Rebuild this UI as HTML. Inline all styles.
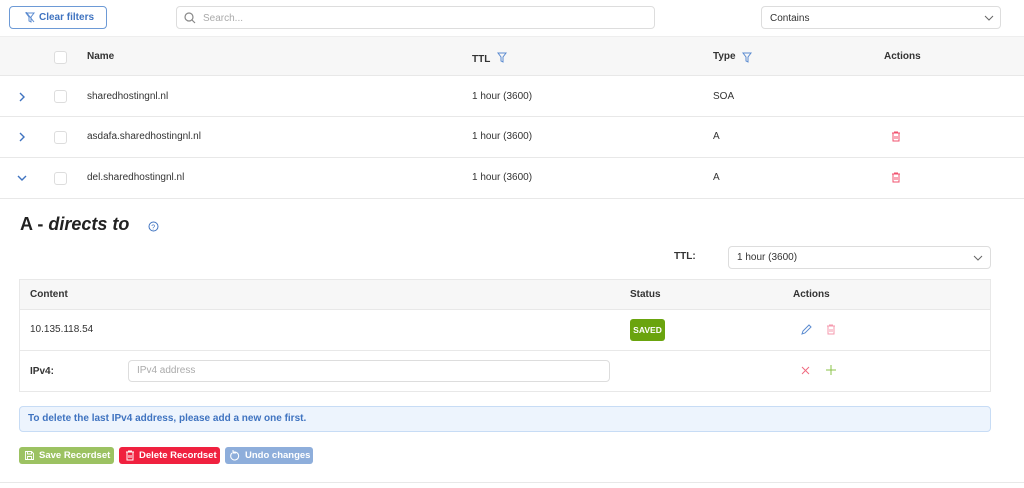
<!DOCTYPE html><html><head><style>
*{box-sizing:border-box;margin:0;padding:0}
body{width:1024px;height:488px;background:#fff;font-family:"Liberation Sans",sans-serif;font-size:10px;color:#333;position:relative;overflow:hidden}
.a{position:absolute}
.b{font-weight:bold;color:#333}
.cb{position:absolute;width:13px;height:13px;border:1px solid #ddd;border-radius:3px;background:#fff}
.line{position:absolute;left:0;width:1024px;height:1px;background:#e8e8e8}
.btn{position:absolute;height:17px;border-radius:3px;color:#fff;font-weight:bold;font-size:9.5px;line-height:17px;padding-left:20px}
</style></head><body>
<div class="a" style="left:9px;top:6px;width:98px;height:23px;border:1px solid #6d9ad6;border-radius:4px;color:#3f73c0;font-weight:bold;font-size:10px;line-height:21px;padding-left:29px">Clear filters
<svg class="a" style="left:15px;top:5px" width="10" height="11" viewBox="0 0 10 11"><path d="M1 1h8L6 5v5L4 9V5z" fill="none" stroke="#5b8bd0" stroke-width="1"/><path d="M1 0l8 10" stroke="#5b8bd0"/></svg></div>
<div class="a" style="left:176px;top:6px;width:479px;height:23px;border:1px solid #ddd;border-radius:4px;color:#aaa;line-height:23px;padding-left:26px">Search...
<svg class="a" style="left:7px;top:5px" width="12" height="12"><circle cx="5" cy="5" r="4" fill="none" stroke="#888" stroke-width="1.2"/><path d="M8 8l3 3" stroke="#888" stroke-width="1.2"/></svg></div>
<div class="a" style="left:761px;top:6px;width:240px;height:23px;border:1px solid #ddd;border-radius:4px;line-height:23px;padding-left:8px">Contains
<svg class="a" style="left:222px;top:8px" width="10" height="6"><path d="M1 1l4 4 4-4" fill="none" stroke="#666"/></svg></div>
<div class="a" style="left:0;top:36px;width:1024px;height:40px;background:#f7f7f7;border-top:1px solid #eee;border-bottom:1px solid #e8e8e8"></div>
<div class="cb" style="left:54px;top:51px"></div>
<div class="a b" style="left:87px;top:51px">Name</div>
<div class="a b" style="left:472px;top:54px">TTL</div>
<svg class="a" style="left:497px;top:52px" width="10" height="11"><path d="M1 1h8L6 5v5L4 9V5z" fill="none" stroke="#5b8bd0"/></svg>
<div class="a b" style="left:713px;top:51px">Type</div>
<svg class="a" style="left:742px;top:52px" width="10" height="11"><path d="M1 1h8L6 5v5L4 9V5z" fill="none" stroke="#5b8bd0"/></svg>
<div class="a b" style="left:884px;top:51px">Actions</div>

<svg class="a" style="left:18px;top:92px" width="8" height="10"><path d="M2 1l4 4-4 4" fill="none" stroke="#3f73c0" stroke-width="1.4"/></svg>
<div class="cb" style="left:54px;top:90px"></div>
<div class="a" style="left:87px;top:91px">sharedhostingnl.nl</div>
<div class="a" style="left:472px;top:91px">1 hour (3600)</div>
<div class="a" style="left:713px;top:91px">SOA</div>
<div class="line" style="top:116px"></div>

<svg class="a" style="left:18px;top:132px" width="8" height="10"><path d="M2 1l4 4-4 4" fill="none" stroke="#3f73c0" stroke-width="1.4"/></svg>
<div class="cb" style="left:54px;top:131px"></div>
<div class="a" style="left:87px;top:131px">asdafa.sharedhostingnl.nl</div>
<div class="a" style="left:472px;top:131px">1 hour (3600)</div>
<div class="a" style="left:713px;top:131px">A</div>
<svg class="a" style="left:891px;top:131px" width="10" height="11"><path d="M1 2h8M3.5 2V1h3v1M2 2v8h6V2M4 5v3M6 5v3" fill="none" stroke="#f0506e"/></svg>
<div class="line" style="top:157px"></div>

<svg class="a" style="left:17px;top:174px" width="10" height="8"><path d="M1 2l4 4 4-4" fill="none" stroke="#3f73c0" stroke-width="1.4"/></svg>
<div class="cb" style="left:54px;top:172px"></div>
<div class="a" style="left:87px;top:172px">del.sharedhostingnl.nl</div>
<div class="a" style="left:472px;top:172px">1 hour (3600)</div>
<div class="a" style="left:713px;top:172px">A</div>
<svg class="a" style="left:891px;top:172px" width="10" height="11"><path d="M1 2h8M3.5 2V1h3v1M2 2v8h6V2M4 5v3M6 5v3" fill="none" stroke="#f0506e"/></svg>
<div class="line" style="top:198px"></div>

<div class="a" style="left:20px;top:214px;font-size:18px;font-weight:bold;color:#222">A - <i>directs to</i></div>
<svg class="a" style="left:148px;top:221px" width="11" height="11"><circle cx="5.5" cy="5.5" r="4.5" fill="none" stroke="#3f73c0"/><text x="3.3" y="8.3" font-size="7" fill="#3f73c0" font-family="Liberation Sans">?</text></svg>
<div class="a b" style="left:674px;top:251px">TTL:</div>
<div class="a" style="left:728px;top:246px;width:263px;height:23px;border:1px solid #ddd;border-radius:4px;line-height:21px;padding-left:8px">1 hour (3600)
<svg class="a" style="left:244px;top:8px" width="10" height="6"><path d="M1 1l4 4 4-4" fill="none" stroke="#666"/></svg></div>

<div class="a" style="left:19px;top:279px;width:972px;height:113px;border:1px solid #e8e8e8"></div>
<div class="a" style="left:20px;top:280px;width:970px;height:30px;background:#f7f7f7;border-bottom:1px solid #e8e8e8"></div>
<div class="a b" style="left:30px;top:289px">Content</div>
<div class="a b" style="left:630px;top:289px">Status</div>
<div class="a b" style="left:793px;top:289px">Actions</div>
<div class="a" style="left:30px;top:324px">10.135.118.54</div>
<div class="a" style="left:630px;top:319px;width:35px;height:22px;background:#6aa40e;border-radius:3px;color:#fff;font-weight:bold;font-size:8.5px;line-height:22px;text-align:center">SAVED</div>
<svg class="a" style="left:800px;top:324px" width="12" height="12"><path d="M2 10l1-3 6-6 2 2-6 6z" fill="none" stroke="#5b8bd0"/></svg>
<svg class="a" style="left:826px;top:324px" width="10" height="11"><path d="M1 2h8M3.5 2V1h3v1M2 2v8h6V2M4 5v3M6 5v3" fill="none" stroke="#f59aae"/></svg>
<div class="a" style="left:20px;top:350px;width:970px;height:1px;background:#e8e8e8"></div>
<div class="a b" style="left:30px;top:366px">IPv4:</div>
<div class="a" style="left:128px;top:360px;width:482px;height:22px;border:1px solid #ddd;border-radius:4px;color:#aaa;line-height:20px;padding-left:8px">IPv4 address</div>
<svg class="a" style="left:801px;top:366px" width="9" height="9"><path d="M1 1l7 7M8 1l-7 7" stroke="#f06b80"/></svg>
<svg class="a" style="left:826px;top:365px" width="10" height="10"><path d="M5 0v10M0 5h10" stroke="#8bc34a"/></svg>

<div class="a" style="left:19px;top:406px;width:972px;height:26px;background:#edf4fd;border:1px solid #c7dcf5;border-radius:4px;color:#3f73c0;font-weight:bold;line-height:24px;padding-left:8px">To delete the last IPv4 address, please add a new one first.</div>

<div class="btn" style="left:19px;top:447px;width:95px;background:#9cc262">Save Recordset
<svg class="a" style="left:6px;top:4px" width="9" height="9"><path d="M.5.5h6l2 2v6h-8z M2.5.5v2.5h4V.5M2.5 8.5v-3h4v3" fill="none" stroke="#fff" stroke-width=".9"/></svg></div>
<div class="btn" style="left:119px;top:447px;width:101px;background:#f0213f">Delete Recordset
<svg class="a" style="left:6px;top:3px" width="10" height="11"><path d="M1 2h8M3.5 2V1h3v1M2 2v8h6V2M4 5v3M6 5v3" fill="none" stroke="#fff"/></svg></div>
<div class="btn" style="left:225px;top:447px;width:88px;background:#8eaedb">Undo changes
<svg class="a" style="left:5px;top:3px" width="10" height="11"><path d="M2 3a4 4 0 1 0 3-1H3M3 0v3h3" fill="none" stroke="#fff"/></svg></div>
<div class="line" style="top:482px"></div>
</body></html>
